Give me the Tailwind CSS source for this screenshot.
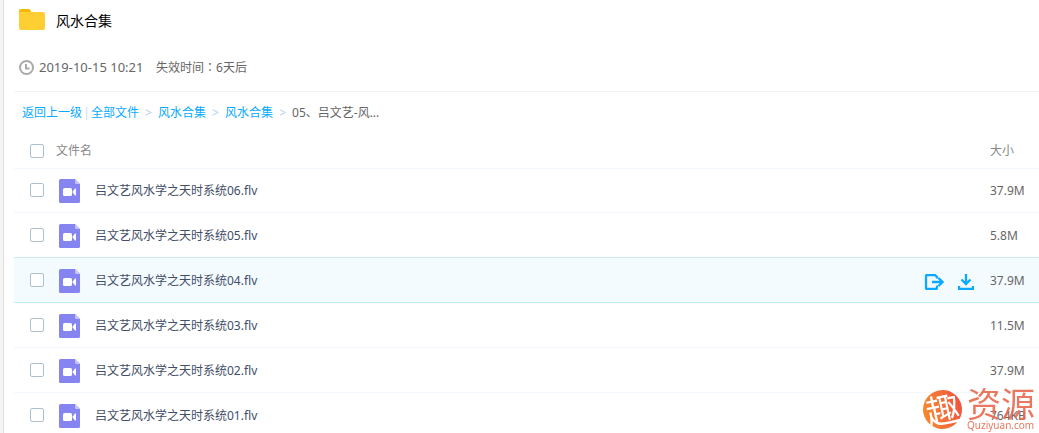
<!DOCTYPE html>
<html lang="zh-CN">
<head>
<meta charset="utf-8">
<title>风水合集</title>
<script src="https://cdn.jsdelivr.net/npm/@tailwindcss/browser@4"></script>
</head>
<body class="min-h-screen overflow-hidden bg-white pl-[3px] font-['Noto_Sans','Noto_Sans_CJK_SC',sans-serif] text-xs text-[#424e67]">
<svg class="hidden">
  <symbol id="video" viewBox="0 0 21 24">
    <path fill="#8584f0" d="M1.5 0H16l5 5v17.5a1.5 1.5 0 0 1-1.5 1.5h-18A1.5 1.5 0 0 1 0 22.5v-21A1.5 1.5 0 0 1 1.5 0Z"/>
    <path fill="#c5c4fa" d="M16 0l5 5h-3.5A1.5 1.5 0 0 1 16 3.500Z"/>
    <rect x="4" y="9" width="9" height="8" rx="1.500" fill="#fff"/>
    <path fill="#fff" d="M13.700 12.500L16 9.500h1v7h-1l-2.300-3Z"/>
  </symbol>
</svg>
<div class="fixed inset-y-0 left-0 w-1 border-r border-[#dedede] bg-[#f5f5f5]"></div>
<main class="pl-[11px]">
  <header class="border-b border-[#f2f2f2]">
    <div class="flex h-[42px] items-center gap-[11px] pl-[5px]">
      <svg class="-mt-1 h-[21px] w-[26px]" viewBox="0 0 26 21"><path fill="#f3b90b" d="M2 0h8.500l2 3v4H0V2a2 2 0 0 1 2-2Z"/><path fill="#ffce32" d="M0 3h24a2 2 0 0 1 2 2v14a2 2 0 0 1-2 2H2a2 2 0 0 1-2-2Z"/></svg>
      <h1 class="text-sm text-black">风水合集</h1>
    </div>
    <div class="flex h-[49px] items-center pt-[2px] pl-[5px] text-[#666]">
      <svg class="mr-[5px] h-[15px] w-[15px]" viewBox="0 0 15 15" fill="none" stroke="#aaa" stroke-width="2"><circle cx="7.500" cy="7.500" r="6.500"/><path d="M7 4v4.500h3.500"/></svg>
      <span class="w-[117px] text-[13px]">2019-10-15 10:21</span>
      <span>失效时间<span lang="zh-TW" class="font-['Noto_Sans_CJK_TC',sans-serif]">：</span>6天后</span>
    </div>
  </header>
  <nav class="flex h-10 items-center pt-px pl-2 text-[#09aaff]">
    <a href="#">返回上一级</a><span class="w-[9px] text-center text-[#c4dbfe]">|</span><a href="#">全部文件</a>
    <span class="w-[19px] text-center text-[#b4cdf0]">&gt;</span><a href="#">风水合集</a>
    <span class="w-[19px] text-center text-[#b4cdf0]">&gt;</span><a href="#">风水合集</a>
    <span class="w-[19px] text-center text-[#b4cdf0]">&gt;</span><span class="text-[#666]">05、吕文艺-风...</span>
  </nav>
  <table class="w-full table-fixed border-collapse text-left">
    <colgroup><col class="w-[42px]"><col><col class="w-[66px]"><col class="w-[49px]"></colgroup>
    <thead>
      <tr class="h-9 border-b border-[#f2f6fd] text-[#888]">
        <th class="pt-[2px] pl-4"><input type="checkbox" aria-label="全选" class="block h-[14px] w-[14px] appearance-none rounded-xs border border-[#aebfd0] bg-white"></th>
        <th class="pt-[2px] font-normal">文件名</th><th></th><th class="pt-[2px] font-normal">大小</th>
      </tr>
    </thead>
    <tbody>
      <tr class="h-11 border-b border-[#f2f6fd]">
        <td class="pl-4"><input id="f6" type="checkbox" class="block h-[14px] w-[14px] appearance-none rounded-xs border border-[#aebfd0] bg-white"></td>
        <td><label for="f6" class="flex items-center gap-[15px] pt-[2px] pl-[3px]"><svg class="h-6 w-[21px]"><use href="#video"/></svg><span>吕文艺风水学之天时系统06.flv</span></label></td>
        <td></td><td class="pt-[2px] text-[#666]">37.9M</td>
      </tr>
      <tr class="h-[45px] border-b border-[#c9e9fb]">
        <td class="pl-4"><input id="f5" type="checkbox" class="block h-[14px] w-[14px] appearance-none rounded-xs border border-[#aebfd0] bg-white"></td>
        <td><label for="f5" class="flex items-center gap-[15px] pt-[2px] pl-[3px]"><svg class="h-6 w-[21px]"><use href="#video"/></svg><span>吕文艺风水学之天时系统05.flv</span></label></td>
        <td></td><td class="pt-[2px] text-[#666]">5.8M</td>
      </tr>
      <tr class="h-[45px] border-b border-[#c0e9fd] bg-[#f4fbff]">
        <td class="pl-4"><input id="f4" type="checkbox" class="block h-[14px] w-[14px] appearance-none rounded-xs border border-[#aebfd0] bg-white"></td>
        <td><label for="f4" class="flex items-center gap-[15px] pt-[2px] pl-[3px]"><svg class="h-6 w-[21px]"><use href="#video"/></svg><span>吕文艺风水学之天时系统04.flv</span></label></td>
        <td>
          <div class="flex gap-[14px] pt-1 text-[#09aaff]">
            <button type="button" aria-label="保存"><svg class="block h-4 w-5" viewBox="0 0 20 16" fill="none" stroke="currentColor" stroke-width="2.300"><path d="M13 4.500V3l-2-2H3a1 1 0 0 0-1 1v12a1 1 0 0 0 1 1h9a1 1 0 0 0 1-1v-2.500M8 8h10M14.500 4l4 4-4 4"/></svg></button>
            <button type="button" aria-label="下载"><svg class="block h-4 w-4" viewBox="0 0 16 16" fill="none" stroke="currentColor" stroke-width="2.300"><path d="M8 0v10M3.500 5.500L8 10 12.500 5.500M1 12v3h14v-3"/></svg></button>
          </div>
        </td><td class="pt-[2px] text-[#666]">37.9M</td>
      </tr>
      <tr class="h-[45px] border-b border-[#f2f6fd]">
        <td class="pl-4"><input id="f3" type="checkbox" class="block h-[14px] w-[14px] appearance-none rounded-xs border border-[#aebfd0] bg-white"></td>
        <td><label for="f3" class="flex items-center gap-[15px] pt-[2px] pl-[3px]"><svg class="h-6 w-[21px]"><use href="#video"/></svg><span>吕文艺风水学之天时系统03.flv</span></label></td>
        <td></td><td class="pt-[2px] text-[#666]">11.5M</td>
      </tr>
      <tr class="h-[45px] border-b border-[#f2f6fd]">
        <td class="pl-4"><input id="f2" type="checkbox" class="block h-[14px] w-[14px] appearance-none rounded-xs border border-[#aebfd0] bg-white"></td>
        <td><label for="f2" class="flex items-center gap-[15px] pt-[2px] pl-[3px]"><svg class="h-6 w-[21px]"><use href="#video"/></svg><span>吕文艺风水学之天时系统02.flv</span></label></td>
        <td></td><td class="pt-[2px] text-[#666]">37.9M</td>
      </tr>
      <tr class="h-[45px]">
        <td class="pl-4"><input id="f1" type="checkbox" class="block h-[14px] w-[14px] appearance-none rounded-xs border border-[#aebfd0] bg-white"></td>
        <td><label for="f1" class="flex items-center gap-[15px] pt-[2px] pl-[3px]"><svg class="h-6 w-[21px]"><use href="#video"/></svg><span>吕文艺风水学之天时系统01.flv</span></label></td>
        <td></td><td class="pt-[2px] text-[#666]">764KB</td>
      </tr>
    </tbody>
  </table>
</main>
<div class="pointer-events-none fixed right-1 bottom-0 flex items-end gap-[5px] text-[#e8694f]/90">
  <div class="mb-1 flex h-[39px] w-[39px] -rotate-12 items-center justify-center rounded-full bg-linear-to-r from-[#f58a2c] to-[#f0523f] text-[34px] leading-none text-white">趣</div>
  <div class="flex w-[68px] flex-col">
    <span class="text-[34px] leading-8">资源</span>
    <span class="pb-[3px] font-['Noto_Sans'] text-[10px] leading-[10px]">Quziyuan.com</span>
  </div>
</div>
</body>
</html>
